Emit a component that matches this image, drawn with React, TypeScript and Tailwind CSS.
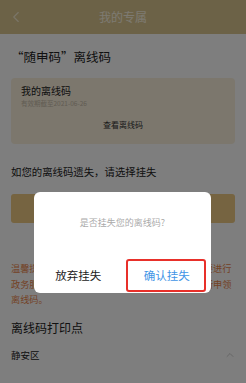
import { ChevronLeft, ChevronUp } from 'lucide-react';

const App = () => {
  return (
    <div
      className="relative w-[246px] h-[383px] overflow-hidden bg-[#fdfdfd]"
      style={{ fontFamily: '"Noto Sans CJK SC", "Noto Sans", sans-serif' }}
    >
      {/* Header */}
      <header className="relative h-[34px] bg-[#d9c58f] flex items-center justify-center">
        <ChevronLeft size={18} strokeWidth={1.5} className="absolute left-[7px] text-[#f4ead0]" />
        <span className="text-[12px] text-[#fbf4e2]">我的专属</span>
      </header>

      <main className="px-[11px]">
        <h2 className="mt-[14px] text-[12.5px] leading-[18px] text-[#222]">“随申码”离线码</h2>

        {/* Card */}
        <div className="mt-[12px] h-[66px] rounded-[4px] bg-[#f8eedb] px-[10px] pt-[6px]">
          <div className="text-[10px] leading-[14px] text-[#222]">我的离线码</div>
          <div className="mt-[1px] text-[6.5px] leading-[9px] text-[#c4b9a6]">有效期截至2021-06-26</div>
          <div className="mt-[11px] text-center text-[8px] leading-[12px] text-[#333]">查看离线码</div>
        </div>

        <p className="mt-[20px] text-[10.4px] leading-[15px] text-[#222]">如您的离线码遗失，请选择挂失</p>

        <div className="mt-[15px] h-[29px] rounded-[3px] bg-[#ecc882]" />

        <p className="mt-[38px] text-[9.2px] leading-[15.5px] text-[#e8844a] break-all">
          温馨提示：您的离线码挂失后将立即作废，如需要进行政务服务，请携带本人身份证件前往打印点处重新申领离线码。
        </p>

        <h3 className="mt-[11px] text-[12px] leading-[18px] text-[#222]">离线码打印点</h3>

        <div className="mt-[11px] flex items-center justify-between">
          <span className="text-[9.5px] leading-[14px] text-[#222]">静安区</span>
          <ChevronUp size={12} strokeWidth={1.5} className="mr-[-1px] text-[#bbb]" />
        </div>
      </main>

      {/* Mask */}
      <div className="absolute inset-0 bg-black/50" />

      {/* Dialog */}
      <div className="absolute left-[34px] top-[192px] w-[177px] h-[101px] rounded-[6px] bg-white flex flex-col">
        <div className="flex-1 flex items-center justify-center pb-[6px]">
          <span className="text-[9px] text-[#aaa]">是否挂失您的离线码?</span>
        </div>
        <div className="h-[34px] flex items-center">
          <button className="flex-1 text-[11.5px] text-[#222]">放弃挂失</button>
          <button className="flex-1 text-[11.5px] text-[#3f95e6]">确认挂失</button>
        </div>
      </div>

      {/* Highlight annotation */}
      <div className="absolute left-[126px] top-[259px] w-[80px] h-[33px] rounded-[3px] border-2 border-[#e8302a]" />
    </div>
  );
};

export default App;
